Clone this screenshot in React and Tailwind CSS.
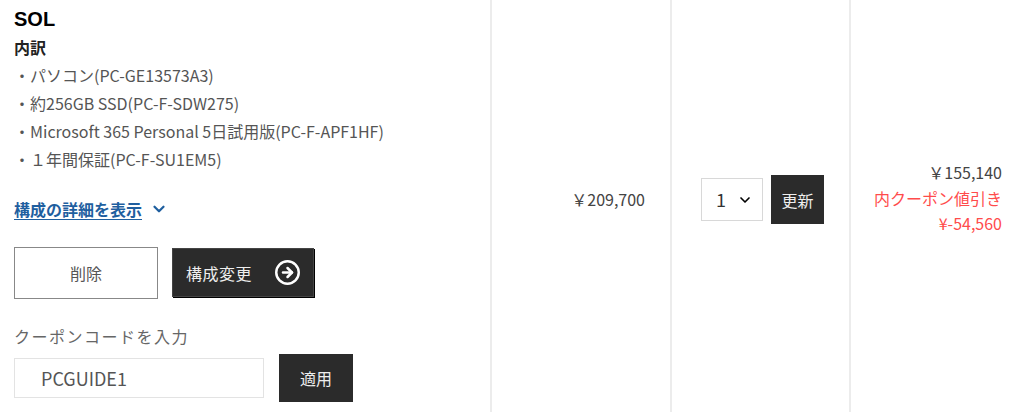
import { ChevronDown, CircleArrowRight } from "lucide-react";

const jp = { fontFamily: '"Noto Sans CJK JP", "Noto Sans", sans-serif' };

const parts = [
  "パソコン(PC-GE13573A3)",
  "約256GB SSD(PC-F-SDW275)",
  "Microsoft 365 Personal 5日試用版(PC-F-APF1HF)",
  "１年間保証(PC-F-SU1EM5)",
];

export default function App() {
  return (
    <div className="flex h-[412px] w-[1024px] overflow-hidden bg-white text-[#333]" style={jp}>
      {/* product cell */}
      <div className="w-[490px] shrink-0 pl-[14px] pt-[6px]">
        <h2 className="font-['Liberation_Sans',sans-serif] text-[20px] font-bold leading-[26px] text-black">SOL</h2>
        <p className="mt-[4px] text-[16px] font-bold leading-[22px] text-[#222]">内訳</p>
        <ul className="mt-[3px] text-[16px] leading-[28px] text-[#555]">
          {parts.map((p) => (
            <li key={p}>・{p}</li>
          ))}
        </ul>
        <button className="mt-[25px] flex items-center gap-[8px] text-[16px] font-bold leading-[22px] text-[#1f5f9f]">
          <span className="underline underline-offset-[3px]">構成の詳細を表示</span>
          <ChevronDown size={18} strokeWidth={3} />
        </button>
        <div className="mt-[27px] flex items-start gap-[14px]">
          <button className="h-[52px] w-[144px] border border-[#888] bg-white text-[16px] text-[#555]">削除</button>
          <button className="mt-px flex h-[49px] w-[142px] items-center justify-between bg-[#2b2b2b] pl-[14px] pr-[13px] text-[16px] tracking-[0.5px] text-[#eee] shadow-[1px_1px_0_#000,inset_0_0_0_1px_#444]">
            構成変更
            <CircleArrowRight size={27} strokeWidth={2.2} className="text-white" />
          </button>
        </div>
        <p className="mt-[25px] text-[16px] leading-[24px] tracking-[1.5px] text-[#666]">クーポンコードを入力</p>
        <div className="mt-[6px] flex items-center gap-[15px]">
          <div className="flex h-[40px] w-[250px] items-center border border-[#e3e3e3] pl-[26px] text-[18px] text-[#555]">PCGUIDE1</div>
          <button className="h-[48px] w-[74px] bg-[#2b2b2b] text-[16px] text-[#eee]">適用</button>
        </div>
      </div>

      {/* unit price */}
      <div className="w-[180px] shrink-0 border-l-2 border-[#ececec] pr-[25px] pt-[187px] text-right text-[16px] leading-[24px] text-[#444]">
        ￥209,700
      </div>

      {/* quantity */}
      <div className="flex w-[179px] shrink-0 items-start gap-[8px] border-l-2 border-[#ececec] pl-[29px] pt-[175px]">
        <div className="mt-[3px] flex h-[43px] w-[62px] items-center justify-between border border-[#d8d8d8] pl-[14px] pr-[9px] text-[18px] text-[#333]">
          1
          <ChevronDown size={16} strokeWidth={2.5} className="text-black" />
        </div>
        <button className="h-[49px] w-[53px] bg-[#2b2b2b] text-[16px] text-[#eee]">更新</button>
      </div>

      {/* subtotal */}
      <div className="flex-1 border-l-2 border-[#ececec] pr-[22px] pt-[160px] text-right text-[16px] leading-[25.5px]">
        <p className="text-[#444]">￥155,140</p>
        <p className="text-[#ff4b4b]">内クーポン値引き</p>
        <p className="text-[#ff4b4b]">¥-54,560</p>
      </div>
    </div>
  );
}
